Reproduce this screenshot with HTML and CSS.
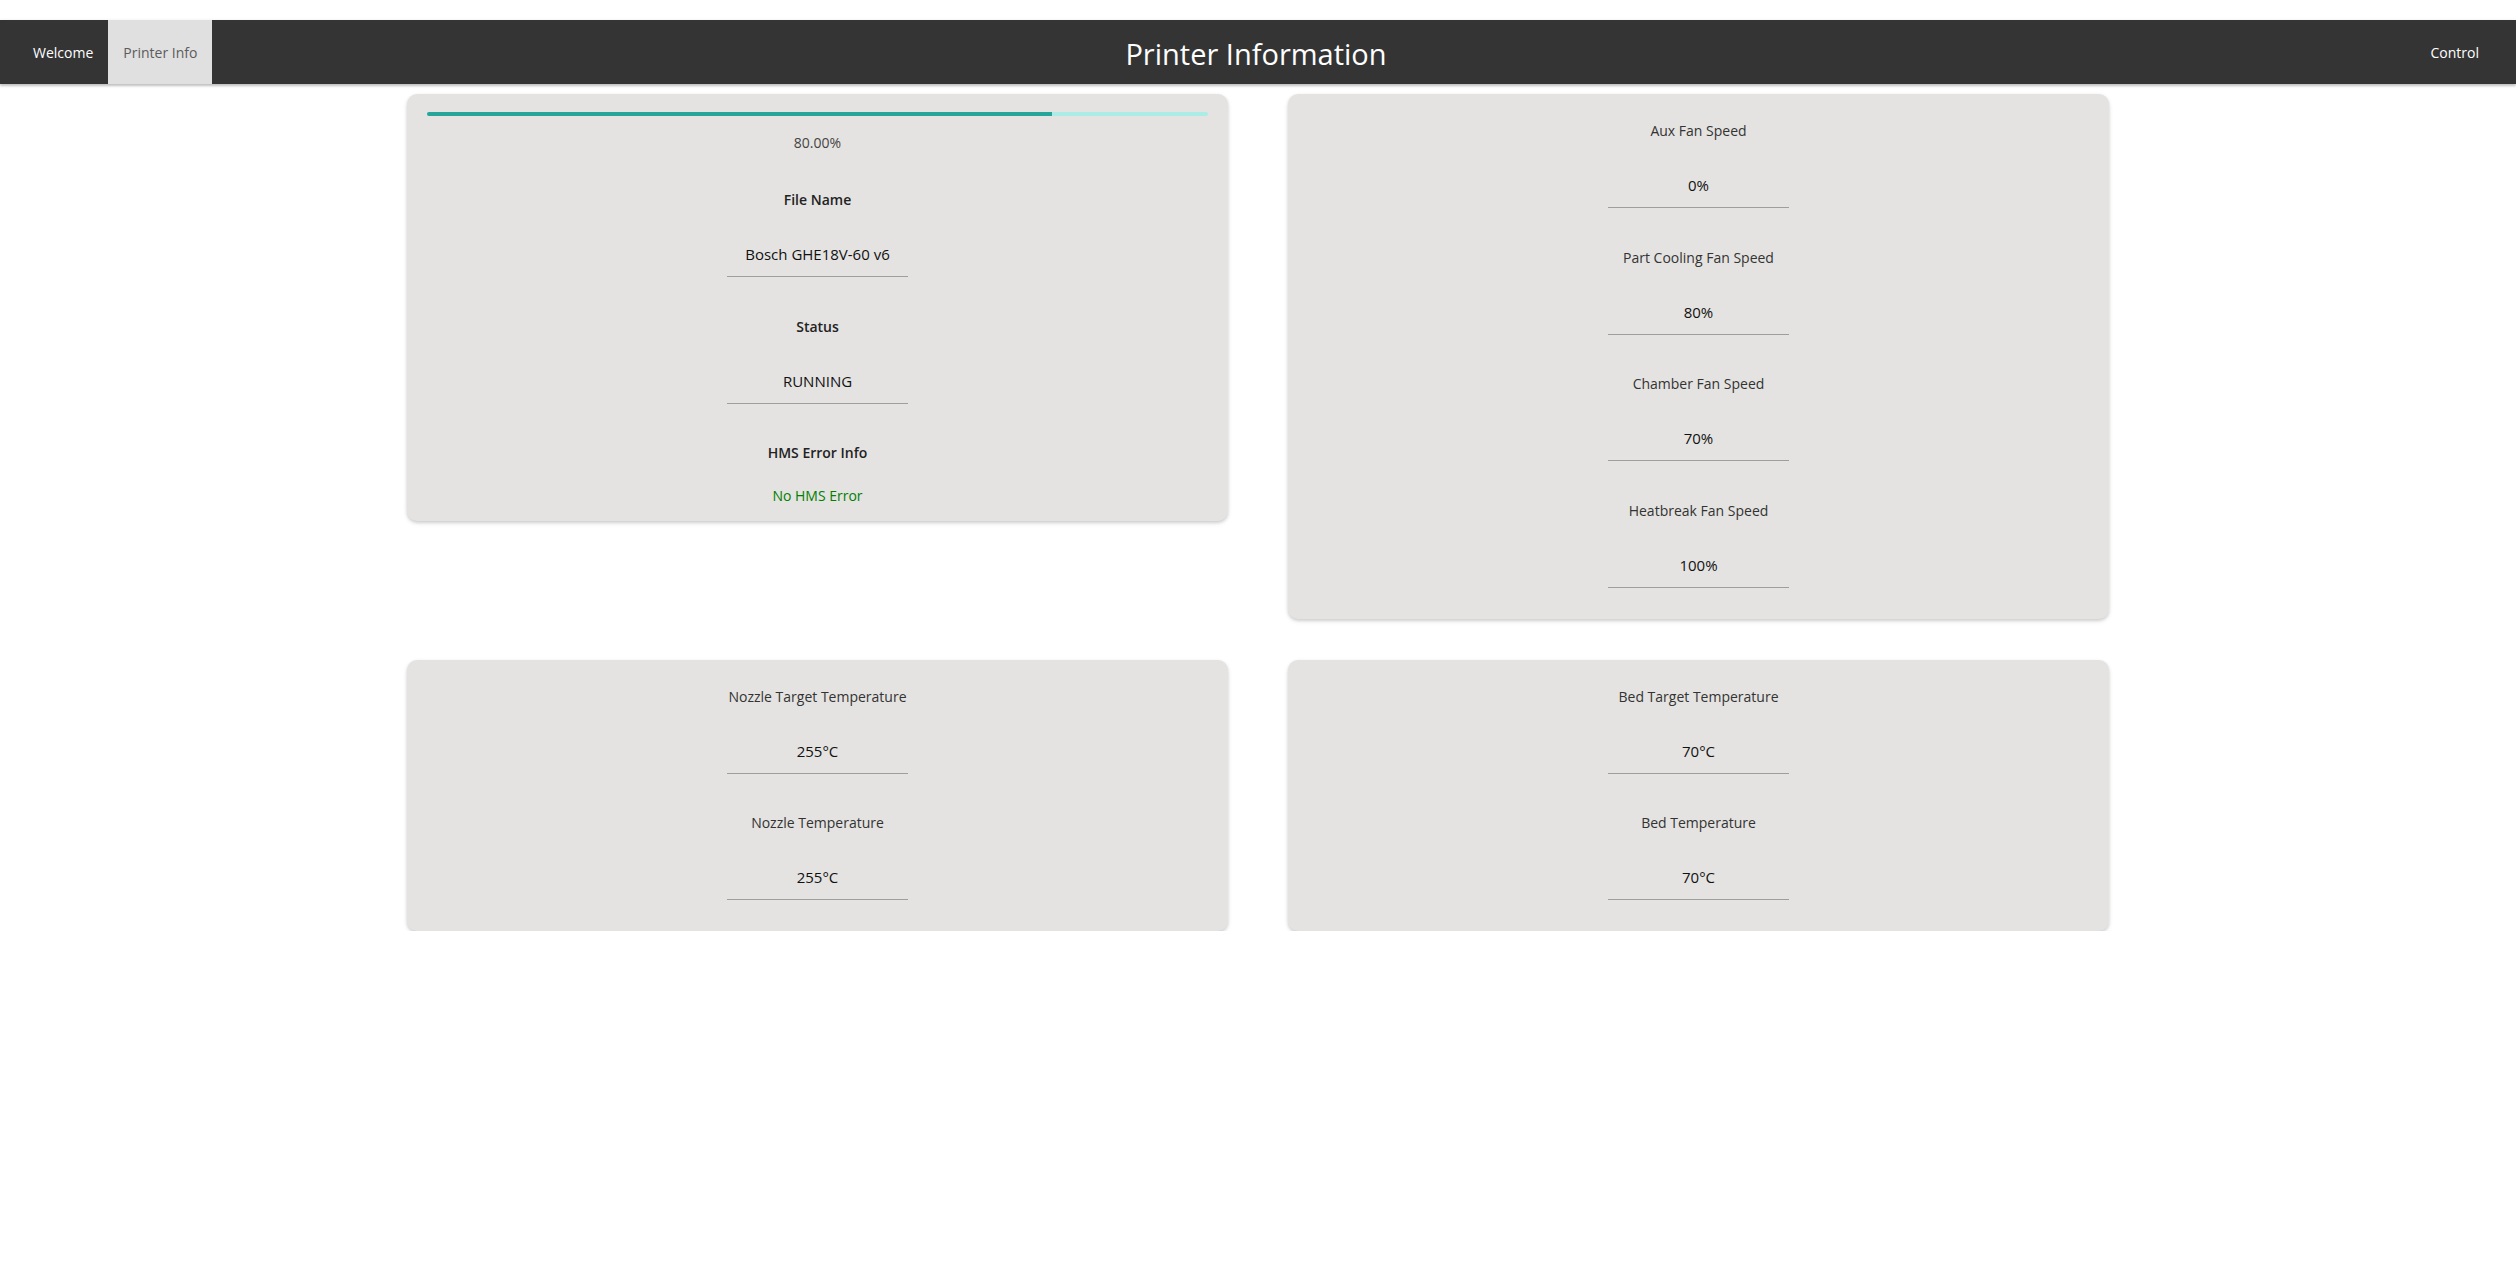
FILE: index.html
```html
<!DOCTYPE html>
<html lang="en">
<head>
<meta charset="utf-8">
<title>Printer Information</title>
<link rel="stylesheet" href="styles.css">
</head>
<body>
<header class="nav">
  <ul class="nav-left">
    <li><a class="nav-link" href="#">Welcome</a></li>
    <li><a class="nav-link active" href="#">Printer Info</a></li>
  </ul>
  <h1 class="nav-title">Printer Information</h1>
  <ul class="nav-right">
    <li><a class="nav-link" href="#">Control</a></li>
  </ul>
</header>

<main class="grid">
  <section class="card card-job">
    <div class="progress"><div class="determinate" style="width: 80%"></div></div>
    <div class="percent">80.00%</div>
    <div class="fields">
      <div class="field">
        <div class="label bold">File Name</div>
        <input class="value" type="text" readonly value="Bosch GHE18V-60 v6">
      </div>
      <div class="field">
        <div class="label bold">Status</div>
        <input class="value" type="text" readonly value="RUNNING">
      </div>
      <div class="field">
        <div class="label bold">HMS Error Info</div>
        <div class="hms-ok">No HMS Error</div>
      </div>
    </div>
  </section>

  <section class="card">
    <div class="fields">
      <div class="field">
        <div class="label">Aux Fan Speed</div>
        <input class="value" type="text" readonly value="0%">
      </div>
      <div class="field">
        <div class="label">Part Cooling Fan Speed</div>
        <input class="value" type="text" readonly value="80%">
      </div>
      <div class="field">
        <div class="label">Chamber Fan Speed</div>
        <input class="value" type="text" readonly value="70%">
      </div>
      <div class="field">
        <div class="label">Heatbreak Fan Speed</div>
        <input class="value" type="text" readonly value="100%">
      </div>
    </div>
  </section>

  <section class="card">
    <div class="fields">
      <div class="field">
        <div class="label">Nozzle Target Temperature</div>
        <input class="value" type="text" readonly value="255°C">
      </div>
      <div class="field">
        <div class="label">Nozzle Temperature</div>
        <input class="value" type="text" readonly value="255°C">
      </div>
    </div>
  </section>

  <section class="card">
    <div class="fields">
      <div class="field">
        <div class="label">Bed Target Temperature</div>
        <input class="value" type="text" readonly value="70°C">
      </div>
      <div class="field">
        <div class="label">Bed Temperature</div>
        <input class="value" type="text" readonly value="70°C">
      </div>
    </div>
  </section>
</main>
</body>
</html>
```

FILE: styles.css
```css
* { box-sizing: border-box; }

html, body {
  margin: 0;
  padding: 0;
  background: #ffffff;
  font-family: "Open Sans", "Noto Sans", "Liberation Sans", sans-serif;
}

body {
  padding-top: 20px;
}

.nav {
  display: grid;
  grid-template-columns: 1fr auto 1fr;
  align-items: stretch;
  height: 64px;
  background: #343434;
  padding: 0 22px 0 18px;
  box-shadow: 0 2px 2px 0 rgba(0,0,0,0.18), 0 1px 4px 0 rgba(0,0,0,0.12);
  position: relative;
  z-index: 2;
}

.nav ul {
  list-style: none;
  margin: 0;
  padding: 0;
  display: flex;
  align-items: stretch;
}

.nav-right { justify-content: flex-end; }

.nav-link {
  display: flex;
  align-items: center;
  height: 100%;
  padding: 0 15px;
  color: #ffffff;
  text-decoration: none;
  font-size: 14px;
}

.nav-link.active {
  background: #e0e0e0;
  color: #5c5c5c;
}

.nav-title {
  margin: 0;
  align-self: center;
  color: #ffffff;
  font-weight: 400;
  font-size: 29px;
  line-height: 64px;
  padding-top: 2px;
  height: 64px;
  letter-spacing: 0;
}

.grid {
  display: grid;
  grid-template-columns: 821px 821px;
  column-gap: 60px;
  row-gap: 41px;
  justify-content: center;
  align-items: start;
  margin-top: 10px;
}

.card {
  background: #e4e3e1;
  border-radius: 10px;
  padding: 27px 20px 31px;
  box-shadow: 0 2px 3px 0 rgba(0,0,0,0.09), 0 3px 6px -1px rgba(0,0,0,0.07), 0 1px 4px 0 rgba(0,0,0,0.08);
}

.card-job {
  padding: 18px 20px 15px;
}

.progress {
  height: 4px;
  border-radius: 2px;
  background: #acece6;
  overflow: hidden;
}

.determinate {
  height: 100%;
  background: #26a69a;
}

.percent {
  margin-top: 17px;
  text-align: center;
  font-size: 14px;
  line-height: 20px;
  color: #444444;
}

.card-job .fields {
  margin-top: 37px;
}

.fields {
  display: flex;
  flex-direction: column;
  align-items: center;
  gap: 39.5px;
}

.field {
  display: flex;
  flex-direction: column;
  align-items: center;
}

.label {
  font-size: 14px;
  line-height: 20px;
  color: #333333;
  margin-bottom: 22px;
}

.label.bold {
  font-weight: 600;
  color: #222222;
}

.value {
  display: block;
  width: 181px;
  height: 45px;
  margin: 0;
  padding: 0;
  border: none;
  border-bottom: 1px solid #9e9e9e;
  border-radius: 0;
  background: transparent;
  outline: none;
  text-align: center;
  font-family: "Open Sans", "Noto Sans", "Liberation Sans", sans-serif;
  font-size: 15px;
  color: #111111;
}

.hms-ok {
  font-size: 14px;
  line-height: 20px;
  color: #008000;
  margin-top: 0.5px;
}
```
